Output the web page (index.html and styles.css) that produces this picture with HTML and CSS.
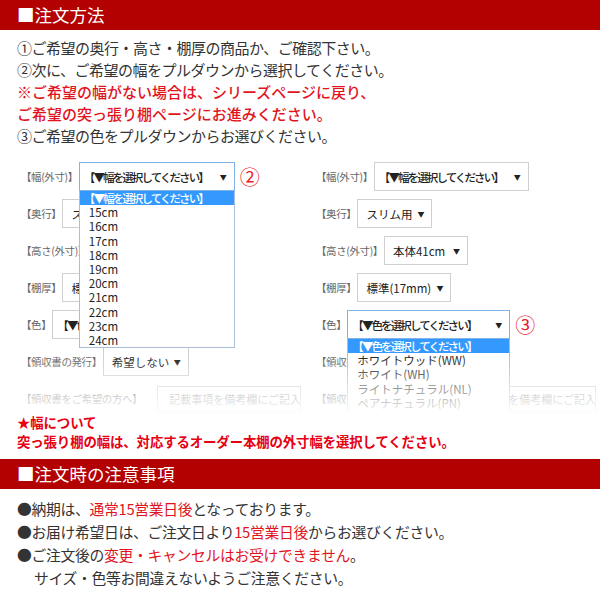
FILE: index.html
```html
<!DOCTYPE html>
<html lang="ja">
<head>
<meta charset="utf-8">
<title>注文方法</title>
<link rel="stylesheet" href="styles.css">
</head>
<body>
<h2 class="bar">■注文方法</h2>
<div class="intro">
  <p>①ご希望の奥行・高さ・棚厚の商品か、ご確認下さい。</p>
  <p>②次に、ご希望の幅をプルダウンから選択してください。</p>
  <p class="red">※ご希望の幅がない場合は、シリーズページに戻り、</p>
  <p class="red">ご希望の突っ張り棚ページにお進みください。</p>
  <p>③ご希望の色をプルダウンからお選びください。</p>
</div>
<div class="form-area">
  <div class="col">
    <div class="row">
      <span class="lbl">【幅(外寸)】</span>
      <div class="selwrap">
        <div class="sel focus w156"><span class="ph">【▼幅を選択してください】</span><span class="arrow">▼</span></div>
        <ul class="list">
          <li class="hl"><span class="ph">【▼幅を選択してください】</span></li>
          <li>15cm</li><li>16cm</li><li>17cm</li><li>18cm</li><li>19cm</li>
          <li>20cm</li><li>21cm</li><li>22cm</li><li>23cm</li><li>24cm</li>
        </ul>
      </div>
      <span class="num">②</span>
    </div>
    <div class="row">
      <span class="lbl">【奥行】</span>
      <div class="sel w75"><span>スリム用</span><span class="arrow">▼</span></div>
    </div>
    <div class="row">
      <span class="lbl">【高さ(外寸)】</span>
      <div class="sel w84"><span>本体41cm</span><span class="arrow">▼</span></div>
    </div>
    <div class="row">
      <span class="lbl">【棚厚】</span>
      <div class="sel w94"><span>標準(17mm)</span><span class="arrow">▼</span></div>
    </div>
    <div class="row">
      <span class="lbl">【色】</span>
      <div class="sel w163"><span class="ph">【▼色を選択してください】</span><span class="arrow">▼</span></div>
    </div>
    <div class="row">
      <span class="lbl">【領収書の発行】</span>
      <div class="sel w86"><span>希望しない</span><span class="arrow">▼</span></div>
    </div>
    <div class="row">
      <span class="lbl">【領収書をご希望の方へ】</span>
      <div class="inp">記載事項を備考欄にご記入ください</div>
    </div>
  </div>
  <div class="col">
    <div class="row">
      <span class="lbl">【幅(外寸)】</span>
      <div class="sel w155"><span class="ph">【▼幅を選択してください】</span><span class="arrow">▼</span></div>
    </div>
    <div class="row">
      <span class="lbl">【奥行】</span>
      <div class="sel w75"><span>スリム用</span><span class="arrow">▼</span></div>
    </div>
    <div class="row">
      <span class="lbl">【高さ(外寸)】</span>
      <div class="sel w84"><span>本体41cm</span><span class="arrow">▼</span></div>
    </div>
    <div class="row">
      <span class="lbl">【棚厚】</span>
      <div class="sel w94"><span>標準(17mm)</span><span class="arrow">▼</span></div>
    </div>
    <div class="row">
      <span class="lbl">【色】</span>
      <div class="selwrap">
        <div class="sel focus w163"><span class="ph">【▼色を選択してください】</span><span class="arrow">▼</span></div>
        <ul class="list">
          <li class="hl"><span class="ph">【▼色を選択してください】</span></li>
          <li>ホワイトウッド(WW)</li>
          <li>ホワイト(WH)</li>
          <li>ライトナチュラル(NL)</li>
          <li>ペアナチュラル(PN)</li>
          <li>ダークブラウン(DB)</li>
        </ul>
      </div>
      <span class="num">③</span>
    </div>
    <div class="row">
      <span class="lbl">【領収書の発行】</span>
      <div class="sel w86"><span>希望しない</span><span class="arrow">▼</span></div>
    </div>
    <div class="row">
      <span class="lbl">【領収書をご希望の方へ】</span>
      <div class="inp">記載事項を備考欄にご記入ください</div>
    </div>
  </div>
  <div class="fade"></div>
</div>
<div class="note">
  <p>★幅について</p>
  <p>突っ張り棚の幅は、対応するオーダー本棚の外寸幅を選択してください。</p>
</div>
<h2 class="bar">■注文時の注意事項</h2>
<div class="notes">
  <p>●納期は、<span class="red">通常15営業日後</span>となっております。</p>
  <p>●お届け希望日は、ご注文日より<span class="red">15営業日後</span>からお選びください。</p>
  <p>●ご注文後の<span class="red">変更・キャンセルはお受けできません</span>。</p>
  <p class="indent">サイズ・色等お間違えないようご注意ください。</p>
</div>
</body>
</html>
```

FILE: styles.css
```css
* { box-sizing: border-box; margin: 0; padding: 0; }
body {
  margin: 0;
  width: 600px;
  background: #fff;
  color: #333;
  font-family: "Noto Sans CJK JP", "Noto Sans", sans-serif;
}
.bar {
  height: 30px;
  line-height: 30px;
  background: #b30000;
  color: #fff;
  font-size: 17.5px;
  font-weight: normal;
  padding-left: 17px;
}
.intro {
  padding: 7px 0 15px 17px;
  font-size: 15px;
  line-height: 22px;
  letter-spacing: -0.5px;
}
.intro .red { color: #e1141e; font-weight: 500; letter-spacing: 0; }

.form-area {
  position: relative;
  height: 250px;
  overflow: hidden;
  display: grid;
  grid-template-columns: 295px 1fr;
  padding-left: 21px;
}
.col { display: flex; flex-direction: column; gap: 8px; }
.row { display: flex; align-items: center; height: 29px; }
.lbl { font-size: 10.5px; letter-spacing: -0.4px; color: #666; margin-right: 1px; white-space: nowrap; }
.selwrap { position: relative; }
.sel {
  height: 29px;
  border: 1px solid #cfcfcf;
  background: #fff;
  display: flex;
  align-items: center;
  justify-content: space-between;
  padding: 0 7px 0 8px;
  font-size: 11.5px;
  color: #222;
  white-space: nowrap;
}
.sel.focus { border-color: #80b3e8; }
.w75 { width: 75px; }
.w84 { width: 84px; }
.w86 { width: 86px; }
.w94 { width: 94px; }
.w155 { width: 155px; }
.w156 { width: 156px; }
.w163 { width: 163px; }
.sel .ph { margin-left: -4px; }
.ph { font-size: 11.5px; letter-spacing: -1.9px; font-weight: 500; }
.arrow { font-size: 7px; color: #222; }
.list {
  position: absolute;
  top: 100%;
  left: 0;
  width: 100%;
  list-style: none;
  background: #fff;
  border: 1px solid #a9bfdc;
  border-top: none;
  z-index: 2;
}
.list li {
  height: 14.2px;
  line-height: 14.2px;
  font-size: 11.5px;
  padding-left: 9px;
  color: #222;
  white-space: nowrap;
}
.list li.hl { background: #3399ff; color: #fff; padding-left: 4px; }
.num {
  color: #e8202a;
  font-size: 20px;
  line-height: 1;
  margin-left: 5px;
}
.inp {
  width: 144px;
  height: 26px;
  margin-left: 14px;
  border: 1px solid #ccc;
  font-size: 11px;
  line-height: 24px;
  padding-left: 11px;
  color: #888;
  white-space: nowrap;
  overflow: hidden;
}
.fade {
  position: absolute;
  left: 0;
  right: 0;
  bottom: 0;
  height: 56px;
  background: linear-gradient(rgba(255,255,255,0), rgba(255,255,255,0.93));
  z-index: 3;
}
.note {
  padding: 1px 0 0 17px;
  color: #e60012;
  font-weight: bold;
  font-size: 13.4px;
  line-height: 19px;
  margin-bottom: 8px;
  letter-spacing: -0.1px;
}
.notes {
  padding: 8px 0 0 17px;
  font-size: 14.8px;
  line-height: 23px;
  letter-spacing: -0.3px;
}
.notes .red { color: #e1141e; }
.notes .indent { padding-left: 17px; }
```
